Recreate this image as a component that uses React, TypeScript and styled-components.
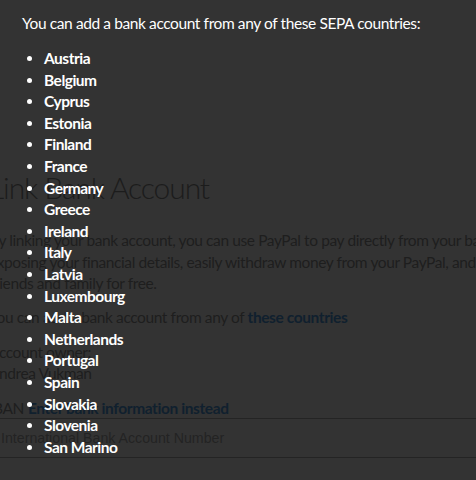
import React from "react";
import styled, { createGlobalStyle } from "styled-components";

const Global = createGlobalStyle`
  html, body { margin: 0; padding: 0; background: #333333; }
  body { width: 476px; height: 480px; overflow: hidden; font-family: Lato, "Noto Sans", sans-serif; }
`;

const Stage = styled.div`
  position: relative;
  width: 476px;
  height: 480px;
  overflow: hidden;
  background: #333333;
`;

const Page = styled.div`
  margin-left: -11px;
  padding-top: 168px;
  width: 560px;
  color: #1e1e1e;
  font-family: Lato, "Noto Sans", sans-serif;
`;

const Title = styled.h1`
  margin: 0;
  font-size: 30px;
  font-weight: 300;
  line-height: 38px;
  color: #1c1c1c;
  letter-spacing: -1.1px;
`;

const Para = styled.p<{ $mt?: number }>`
  margin: ${(p) => p.$mt ?? 0}px 0 0;
  font-size: 15.5px;
  line-height: 21.5px;
  letter-spacing: -0.4px;
  white-space: nowrap;
`;

const Link = styled.span`
  font-weight: 700;
  color: #10202e;
`;

const Label = styled.div<{ $mt?: number }>`
  margin-top: ${(p) => p.$mt ?? 0}px;
  font-size: 15.5px;
  line-height: 21px;
  letter-spacing: -0.4px;
`;

const FieldRow = styled.div`
  margin-top: 14px;
  font-size: 15.5px;
  line-height: 20px;
  letter-spacing: -0.4px;
  display: flex;
  gap: 4px;
`;

const Input = styled.div`
  height: 38px;
  border-top: 1px solid #242424;
  border-bottom: 1px solid #242424;
  display: flex;
  align-items: center;
  font-family: "Liberation Sans", Arial, sans-serif;
  font-size: 14.2px;
  color: #232323;
  padding-left: 12px;
`;

const Overlay = styled.div`
  position: absolute;
  top: 0;
  left: 0;
  padding: 12px 0 0 22px;
  color: #ffffff;
  font-family: Lato, "Noto Sans", sans-serif;
`;

const Heading = styled.div`
  font-size: 15.5px;
  line-height: 22px;
  font-weight: 400;
  letter-spacing: -0.4px;
`;

const List = styled.ul`
  margin: 14px 0 0;
  padding-left: 22px;
`;

const Item = styled.li`
  font-size: 15.5px;
  line-height: 21.6px;
  font-weight: 700;
  letter-spacing: -0.5px;
`;

const countries = [
  "Austria", "Belgium", "Cyprus", "Estonia", "Finland", "France", "Germany",
  "Greece", "Ireland", "Italy", "Latvia", "Luxembourg", "Malta", "Netherlands",
  "Portugal", "Spain", "Slovakia", "Slovenia", "San Marino",
];

export default function App() {
  return (
    <Stage>
      <Global />
      <Page>
        <Title>Link Bank Account</Title>
        <Para $mt={24}>
          By linking your bank account, you can use PayPal to pay directly from your bank account without
          <br />
          exposing your financial details, easily withdraw money from your PayPal, and send money to
          <br />
          friends and family for free.
        </Para>
        <Para $mt={12}>
          You can add a bank account from any of <Link>these countries</Link>
        </Para>
        <Label $mt={14}>Account owner:</Label>
        <Label>Andrea Vukman</Label>
        <FieldRow>
          <span>IBAN</span>
          <Link>Enter bank information instead</Link>
        </FieldRow>
        <Input>International Bank Account Number</Input>
      </Page>
      <Overlay>
        <Heading>You can add a bank account from any of these SEPA countries:</Heading>
        <List>
          {countries.map((c) => (
            <Item key={c}>{c}</Item>
          ))}
        </List>
      </Overlay>
    </Stage>
  );
}
